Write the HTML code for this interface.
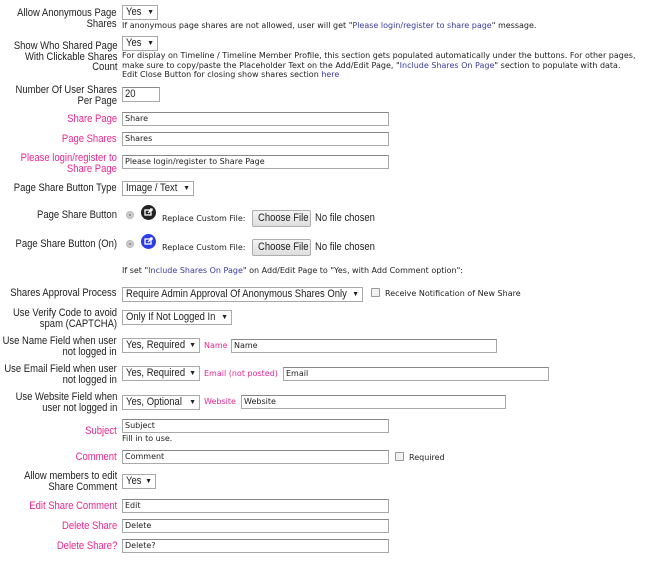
<!DOCTYPE html>
<html><head><meta charset="utf-8"><style>
*{box-sizing:border-box;margin:0;padding:0}
body{width:650px;height:562px;background:#fff;font-family:"Liberation Sans",Arial,sans-serif;font-size:11px;color:#222;position:relative;overflow:hidden}
.a{position:absolute;white-space:nowrap}
.c{display:inline-block;transform:scaleX(.86);transform-origin:left center;white-space:nowrap}
.l{position:absolute;right:533px;text-align:right;line-height:11px;font-size:11px;color:#222;white-space:nowrap;transform:scaleX(.86);transform-origin:right center}
.p{color:#e8288e}
.s{position:absolute;border:1px solid #a9a9a9;background:#fff;font-size:11px;line-height:12px;padding:0 3px;height:15px;white-space:nowrap;overflow:hidden}
.s::after{content:"▼";position:absolute;right:3px;top:1px;font-size:7px;background:#fff}
.i{position:absolute;border:1px solid #a9a9a9;border-top-color:#888;height:14px;font-family:"DejaVu Sans",Verdana,sans-serif;font-size:8px;line-height:12px;padding-left:2px;background:#fff;white-space:nowrap}
.h{position:absolute;font-family:"DejaVu Sans",Verdana,sans-serif;font-size:8px;line-height:9.5px;white-space:nowrap;color:#222}
.k{color:#3b3b9e}
.sp{position:absolute;font-family:"DejaVu Sans",Verdana,sans-serif;font-size:8px;white-space:nowrap}
.rad{position:absolute;width:8px;height:8px;border-radius:50%;background:#ccc;border:1px solid #bbb}
.rad::after{content:"";position:absolute;left:2px;top:2px;width:2px;height:2px;border-radius:50%;background:#888}
.btn{position:absolute;width:59px;height:17px;border:1px solid #adadad;background:linear-gradient(#f4f4f4,#dedede);font-size:11px;line-height:15px;border-radius:2px;white-space:nowrap;padding-left:5px}
.cb{position:absolute;width:9px;height:9px;border:1px solid #999;background:#f1f1f1;border-radius:1px}
.ic{position:absolute;width:15px;height:15px;border-radius:50%}
</style></head><body>

<div class="l" style="top:8px">Allow Anonymous Page<br>Shares</div>
<div class="s" style="left:122px;top:5px;width:36px"><span class="c">Yes</span></div>
<div class="h" style="left:122px;top:21px">If anonymous page shares are not allowed, user will get "<span class="k">Please login/register to share page</span>" message.</div>

<div class="l" style="top:41px;line-height:10.5px">Show Who Shared Page<br>With Clickable Shares<br>Count</div>
<div class="s" style="left:122px;top:36px;width:36px"><span class="c">Yes</span></div>
<div class="h" style="left:122px;top:51px">For display on Timeline / Timeline Member Profile, this section gets populated automatically under the buttons. For other pages,<br>make sure to copy/paste the Placeholder Text on the Add/Edit Page, "<span class="k">Include Shares On Page</span>" section to populate with data.<br>Edit Close Button for closing show shares section <span class="k">here</span></div>

<div class="l" style="top:85px">Number Of User Shares<br>Per Page</div>
<div class="i" style="left:122px;top:87px;width:38px;height:15px;font-family:'Liberation Sans',Arial;font-size:11px"><span class="c">20</span></div>

<div class="l p" style="top:114px">Share Page</div>
<div class="i" style="left:122px;top:112px;width:267px">Share</div>
<div class="l p" style="top:134px">Page Shares</div>
<div class="i" style="left:122px;top:132px;width:267px">Shares</div>
<div class="l p" style="top:153px">Please login/register to<br>Share Page</div>
<div class="i" style="left:122px;top:155px;width:267px">Please login/register to Share Page</div>

<div class="l" style="top:183px">Page Share Button Type</div>
<div class="s" style="left:122px;top:181px;width:72px"><span class="c">Image / Text</span></div>

<div class="l" style="top:210px">Page Share Button</div>
<div class="rad" style="left:126px;top:211px"></div>
<div class="ic" style="left:141px;top:205px;background:#222"><svg width="15" height="15" viewBox="0 0 15 15"><rect x="4" y="5" width="6" height="5" fill="none" stroke="#fff" stroke-width="1.3"/><path d="M7 8 L11 4 M9 4 H11 V6" stroke="#fff" stroke-width="1.3" fill="none"/></svg></div>
<div class="sp" style="left:162px;top:214px">Replace Custom File:</div>
<div class="btn" style="left:252px;top:210px"><span class="c">Choose File</span></div>
<div class="a" style="left:315px;top:212px;font-size:11px"><span class="c">No file chosen</span></div>

<div class="l" style="top:239px">Page Share Button (On)</div>
<div class="rad" style="left:126px;top:240px"></div>
<div class="ic" style="left:141px;top:234px;background:#2d3de6"><svg width="15" height="15" viewBox="0 0 15 15"><rect x="4" y="5" width="6" height="5" fill="none" stroke="#fff" stroke-width="1.3"/><path d="M7 8 L11 4 M9 4 H11 V6" stroke="#fff" stroke-width="1.3" fill="none"/></svg></div>
<div class="sp" style="left:162px;top:243px">Replace Custom File:</div>
<div class="btn" style="left:252px;top:239px"><span class="c">Choose File</span></div>
<div class="a" style="left:315px;top:241px;font-size:11px"><span class="c">No file chosen</span></div>

<div class="h" style="left:122px;top:266px">If set "<span class="k">Include Shares On Page</span>" on Add/Edit Page to "Yes, with Add Comment option":</div>

<div class="l" style="top:288px">Shares Approval Process</div>
<div class="s" style="left:122px;top:287px;width:241px"><span class="c">Require Admin Approval Of Anonymous Shares Only</span></div>
<div class="cb" style="left:371px;top:288px"></div>
<div class="sp" style="left:385px;top:289px">Receive Notification of New Share</div>

<div class="l" style="top:308px">Use Verify Code to avoid<br>spam (CAPTCHA)</div>
<div class="s" style="left:122px;top:310px;width:110px"><span class="c">Only If Not Logged In</span></div>

<div class="l" style="top:336px">Use Name Field when user<br>not logged in</div>
<div class="s" style="left:122px;top:338px;width:78px"><span class="c">Yes, Required</span></div>
<div class="sp p" style="left:204px;top:341px">Name</div>
<div class="i" style="left:231px;top:339px;width:266px">Name</div>

<div class="l" style="top:364px">Use Email Field when user<br>not logged in</div>
<div class="s" style="left:122px;top:366px;width:78px"><span class="c">Yes, Required</span></div>
<div class="sp p" style="left:204px;top:369px">Email (not posted)</div>
<div class="i" style="left:283px;top:367px;width:266px">Email</div>

<div class="l" style="top:392px">Use Website Field when<br>user not logged in</div>
<div class="s" style="left:122px;top:395px;width:78px"><span class="c">Yes, Optional</span></div>
<div class="sp p" style="left:204px;top:397px;z-index:2">Website</div>
<div class="i" style="left:241px;top:395px;width:265px">Website</div>

<div class="l p" style="top:426px">Subject</div>
<div class="i" style="left:122px;top:419px;width:267px">Subject</div>
<div class="h" style="left:122px;top:434px">Fill in to use.</div>

<div class="l p" style="top:452px">Comment</div>
<div class="i" style="left:122px;top:450px;width:267px">Comment</div>
<div class="cb" style="left:395px;top:452px"></div>
<div class="sp" style="left:409px;top:453px">Required</div>

<div class="l" style="top:471px">Allow members to edit<br>Share Comment</div>
<div class="s" style="left:122px;top:474px;width:34px"><span class="c">Yes</span></div>

<div class="l p" style="top:501px">Edit Share Comment</div>
<div class="i" style="left:122px;top:499px;width:267px">Edit</div>
<div class="l p" style="top:521px">Delete Share</div>
<div class="i" style="left:122px;top:519px;width:267px">Delete</div>
<div class="l p" style="top:541px">Delete Share?</div>
<div class="i" style="left:122px;top:539px;width:267px">Delete?</div>

</body></html>
